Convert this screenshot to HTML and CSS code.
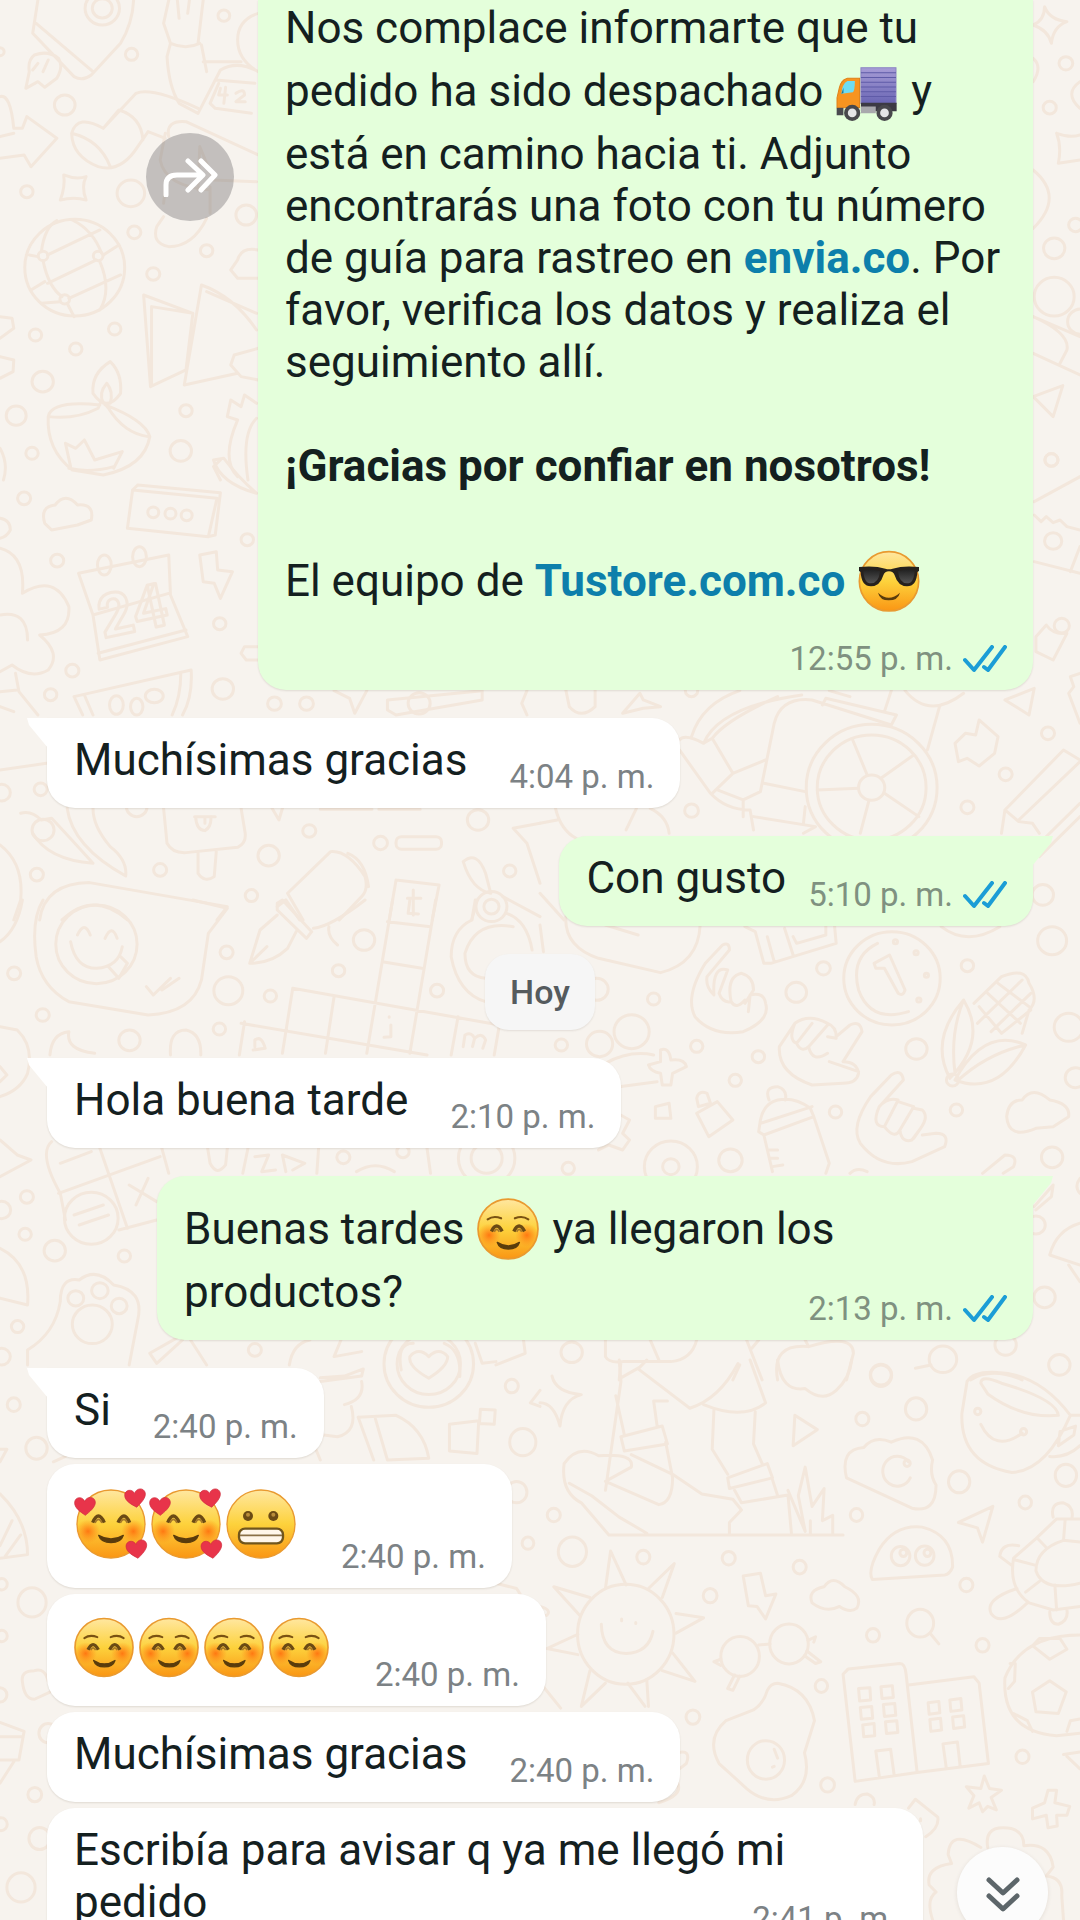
FILE: index.html
```html
<!DOCTYPE html>
<html lang="es">
<head>
<meta charset="utf-8">
<meta name="viewport" content="width=device-width, initial-scale=1">
<title>Chat</title>
<link rel="stylesheet" href="styles.css">
</head>
<body>
<svg class="defs" aria-hidden="true">
  <defs>
    <linearGradient id="face" x1="0" y1="0" x2="0" y2="1">
      <stop offset="0" stop-color="#ffe7a0"/><stop offset=".5" stop-color="#fdd23c"/><stop offset="1" stop-color="#fa9614"/>
    </linearGradient>
    <radialGradient id="cheek"><stop offset="0" stop-color="#ff7410" stop-opacity=".95"/><stop offset="1" stop-color="#ff8a1a" stop-opacity="0"/></radialGradient>
    <linearGradient id="cargo" x1="0" y1="0" x2="0" y2="1"><stop offset="0" stop-color="#a79dd6"/><stop offset="1" stop-color="#6a66b4"/></linearGradient>
    <linearGradient id="lens" x1="0" y1="0" x2="0" y2="1"><stop offset="0" stop-color="#222"/><stop offset="1" stop-color="#555"/></linearGradient>
    <path id="heart" d="M0 30C-14 20-34 8-32-10C-30-26-8-28-2-12C4-28 28-28 30-10C31 6 12 20 0 30Z" fill="#e8344a" stroke="#cf2c3c" stroke-width="2"/>
    <symbol id="smile" viewBox="0 0 180 180">
      <circle cx="90" cy="90" r="87" fill="url(#face)" stroke="#e99a30" stroke-width="5"/>
      <circle cx="35" cy="108" r="34" fill="url(#cheek)"/><circle cx="145" cy="108" r="34" fill="url(#cheek)"/>
      <path d="M31 62Q48 50 70 59M149 62Q132 50 110 59" fill="none" stroke="#7a5212" stroke-width="6" stroke-linecap="round"/>
      <path d="M42 97Q57 66 73 97M107 97Q122 66 138 97" fill="none" stroke="#6b4a14" stroke-width="10"/>
      <path d="M50 98Q57 84 65 98M115 98Q122 84 130 98" fill="none" stroke="#a5782a" stroke-width="5"/>
      <path d="M59 129Q91 150 123 129Q117 148 91 148Q65 148 59 129Z" fill="#5a3c0c" stroke="#5a3c0c" stroke-width="4" stroke-linejoin="round"/>
    </symbol>
    <symbol id="love" viewBox="40 45 225 216">
      <circle cx="151" cy="156" r="102" fill="url(#face)" stroke="#e99a30" stroke-width="4"/>
      <circle cx="82" cy="178" r="36" fill="url(#cheek)"/><circle cx="218" cy="178" r="36" fill="url(#cheek)"/>
      <path d="M96 152Q113 112 131 152M172 152Q190 112 207 152" fill="none" stroke="#6b4a14" stroke-width="10"/>
      <path d="M103 153Q113 131 124 153M179 153Q190 131 200 153" fill="none" stroke="#a5782a" stroke-width="5"/>
      <path d="M114 190Q151 212 188 190Q181 212 151 212Q121 212 114 190Z" fill="#5a3c0c" stroke="#5a3c0c" stroke-width="4" stroke-linejoin="round"/>
      <use href="#heart" transform="translate(74 100)"/><use href="#heart" transform="translate(225 76) rotate(-6)"/><use href="#heart" transform="translate(229 229) rotate(-6)"/>
    </symbol>
    <symbol id="grimace" viewBox="40 45 225 216">
      <circle cx="151" cy="156" r="102" fill="url(#face)" stroke="#e99a30" stroke-width="4"/>
      <circle cx="112" cy="132" r="15" fill="#6b4a14"/><circle cx="188" cy="132" r="15" fill="#6b4a14"/>
      <circle cx="112" cy="128" r="6" fill="#b98c3a"/><circle cx="188" cy="128" r="6" fill="#b98c3a"/>
      <rect x="85" y="170" width="132" height="44" rx="18" fill="#fff6ea" stroke="#70551c" stroke-width="7"/>
      <path d="M88 190H214" stroke="#8a7048" stroke-width="5"/>
    </symbol>
    <symbol id="cool" viewBox="0 0 186 186">
      <circle cx="93" cy="94" r="89" fill="url(#face)" stroke="#e99a30" stroke-width="5"/>
      <path d="M3 51Q50 46 82 56Q93 59 104 56Q136 46 183 51V63L178 66Q176 109 147 109Q120 109 110 76Q106 64 93 64Q80 64 76 76Q66 109 39 109Q10 109 8 66L3 63Z" fill="#26211d"/>
      <path d="M16 62Q44 56 66 64Q62 100 39 100Q18 100 16 62ZM170 62Q142 56 120 64Q124 100 147 100Q168 100 170 62Z" fill="url(#lens)"/>
      <path d="M60 128Q92 158 126 128Q120 151 92 151Q66 151 60 128Z" fill="#5a3c0c"/>
    </symbol>
    <symbol id="truck" viewBox="50 60 184 184">
      <rect x="124" y="83" width="104" height="106" fill="url(#cargo)" stroke="#8b84c4" stroke-width="3"/>
      <path d="M124 98H228M124 112H228M124 126H228M124 140H228M124 154H228M124 168H228" stroke="#5f5ba8" stroke-width="3"/>
      <path d="M124 187H230V212H124Z" fill="#3c3a44"/>
      <path d="M120 114H84Q66 118 60 142L53 172V202H120Z" fill="#f79420" stroke="#e08018" stroke-width="3"/>
      <path d="M106 122H84Q68 130 66 160L100 156Q106 150 106 122Z" fill="#6fdcf2"/>
      <path d="M66 160L72 142V158Z" fill="#1f7890"/>
      <path d="M52 202H72V224H52Z" fill="#4a4a50"/>
      <rect x="124" y="198" width="44" height="20" fill="#a9a9ad"/>
      <circle cx="98" cy="217" r="24" fill="#48484c"/><circle cx="98" cy="217" r="13" fill="#e4e4e6"/>
      <circle cx="194" cy="217" r="24" fill="#48484c"/><circle cx="194" cy="217" r="13" fill="#e4e4e6"/>
    </symbol>
    <symbol id="checks" viewBox="0 0 44 28">
      <path d="M2 15L11 25L29 2M21 22L25 25L42 2" fill="none" stroke="#1b9dd6" stroke-width="4" stroke-linecap="round" stroke-linejoin="round"/>
    </symbol>
  </defs>
</svg>

<svg class="wallpaper" viewBox="0 0 1080 1920" preserveAspectRatio="xMidYMin slice" aria-hidden="true">
  <!-- rocket, hand, sock, globe, book, lamp -->
  <g transform="scale(.3444 .3333)">
    <path d="M110 0L95 100L215 230Q240 245 265 225L350 130Q385 70 388 0M105 70L270 215M85 215L75 265L110 245L130 262L165 235Q185 200 170 175Q140 150 100 165Q80 180 85 215M110 190L95 210M140 180L125 215"/>
    <circle cx="297" cy="25" r="50"/><circle cx="297" cy="25" r="29"/><circle cx="650" cy="47" r="17"/><circle cx="382" cy="163" r="18"/><circle cx="188" cy="315" r="30"/><circle cx="0" cy="155" r="12"/>
    <path d="M490 0L475 70L495 130L485 170Q490 260 520 310L575 340L625 240M515 0L520 55M550 0L545 40M590 0L575 130M585 135L600 215M495 130Q540 150 580 130M590 185H700M750 40Q690 60 690 120Q690 180 750 215M600 290L640 210Q690 180 750 215M625 240L740 250M635 250L610 310L625 325L730 340"/>
    <path d="M640 265L635 285H660M655 262L650 310M685 280Q710 262 710 285L685 305H712"/>
    <path d="M0 290Q30 280 40 385H65L78 350L165 415L90 500L70 465L0 475M0 410L40 400"/>
    <path d="M300 385Q225 340 208 400Q210 470 285 500Q350 520 400 440L430 395L480 415M300 385L395 280Q440 260 575 325M300 385L345 330Q410 350 415 420M208 400Q290 420 320 500M490 410Q480 360 540 365L750 465M480 400L465 480Q480 560 610 570M580 440L620 540L745 545M580 440L575 570M480 560L475 610M610 560V640M600 655Q560 740 490 740Q440 730 455 680L475 650"/>
    <path d="M185 525Q220 540 250 530Q235 560 250 600Q215 590 175 600Q190 560 185 525Z"/>
    <circle cx="78" cy="575" r="18"/><circle cx="380" cy="580" r="40"/><circle cx="390" cy="697" r="19"/><circle cx="600" cy="752" r="18"/><circle cx="445" cy="822" r="19"/><circle cx="715" cy="645" r="30"/>
    <circle cx="217" cy="803" r="145"/><circle cx="125" cy="768" r="14"/><circle cx="285" cy="768" r="14"/><circle cx="188" cy="898" r="14"/>
    <path d="M120 755Q130 680 165 662M138 765L290 690M295 760Q270 690 210 660M85 765L110 770M125 782Q140 860 180 890M138 850L280 780M90 870L130 845M200 895L350 825M290 785Q325 870 290 930M195 910L215 950M300 765L345 735M175 905L120 910"/>
    <path d="M750 750Q700 740 690 780L670 810L690 835H750M417 885L560 940L540 1110L437 1160ZM440 920L440 1150M440 920L560 940M585 855L535 1155L690 1120M585 855Q680 890 745 990M600 875L745 940M750 1045L680 1065L670 1095L700 1130L750 1140"/>
    <path d="M0 950L35 955L40 985L0 1015M0 1070L40 1080L38 1115L0 1135"/>
    <circle cx="103" cy="1005" r="18"/><circle cx="333" cy="987" r="18"/><circle cx="220" cy="1047" r="18"/><circle cx="124" cy="1145" r="31"/><circle cx="47" cy="1247" r="29"/><circle cx="540" cy="1232" r="18"/><circle cx="525" cy="1353" r="31"/><circle cx="93" cy="1360" r="18"/>
    <path d="M320 1085Q265 1120 270 1180Q310 1240 350 1180Q355 1120 320 1085ZM310 1150Q285 1180 300 1210H320Q330 1175 310 1150M290 1215Q150 1200 140 1250Q135 1350 210 1410L300 1425Q420 1400 435 1310Q420 1260 305 1215M140 1250Q220 1260 285 1225L295 1200L315 1225Q360 1300 430 1310M205 1400L190 1330L220 1345L245 1320L275 1380L355 1355L330 1405M200 1405Q260 1420 330 1400"/>
    <path d="M660 1250L670 1200L700 1220L710 1185L745 1210M660 1250L690 1260Q640 1380 690 1430M745 1255Q700 1300 720 1440M640 1380L620 1400L640 1440M0 1345Q25 1390 10 1440"/>
  </g>
  <!-- right margin, upper part -->
  <g transform="translate(540) scale(.3444 .3333)">
    <path d="M1465 20Q1480 60 1530 65Q1490 80 1485 130Q1475 90 1432 75Q1465 60 1465 20ZM1432 175Q1460 200 1432 245M1568 245Q1520 280 1568 325M1500 400Q1540 415 1568 405M1500 400Q1515 440 1505 490L1568 480M1432 510Q1525 590 1432 685M1432 950L1568 1010M1432 950Q1540 1000 1530 1050L1510 1090M1432 1060L1568 1125M1432 1190L1518 1157L1490 1250Z"/>
    <circle cx="1527" cy="190" r="20"/><circle cx="1480" cy="323" r="19"/><circle cx="1493" cy="745" r="31"/><circle cx="1555" cy="675" r="20"/><circle cx="1493" cy="890" r="58"/><circle cx="1570" cy="965" r="38"/><circle cx="1485" cy="1380" r="19"/>
  </g>
  <!-- radio, cloud, calendar, melon, ice lolly, pen -->
  <g transform="translate(0 440) scale(.3444 .3333)">
    <path d="M385 150L630 175L605 290L370 265ZM400 135L640 158L625 285L605 290M385 150L400 135M130 250Q115 200 160 195Q190 155 225 195Q275 190 265 240L225 255L150 270Z"/>
    <circle cx="445" cy="217" r="16"/><circle cx="495" cy="221" r="16"/><circle cx="542" cy="226" r="16"/><circle cx="70" cy="175" r="19"/><circle cx="718" cy="299" r="18"/><circle cx="166" cy="362" r="19"/><circle cx="638" cy="551" r="18"/><circle cx="210" cy="692" r="19"/><circle cx="147" cy="764" r="18"/><circle cx="647" cy="747" r="31"/><circle cx="797" cy="791" r="20"/><circle cx="890" cy="791" r="20"/>
    <path d="M228 400L490 345L495 465L545 590L290 660L270 525ZM270 525L490 460M285 640L540 570M580 345L628 335L632 390L675 395L640 475L622 430L590 425ZM0 235Q30 240 30 270Q20 290 0 295M0 325Q75 345 65 460Q160 400 200 500Q205 580 115 585Q180 640 140 690Q90 720 35 675L0 695M0 525Q80 510 80 600M45 700L55 755L110 825M0 755L50 750M0 800L40 815M215 770L555 690Q560 770 530 825M215 770L240 825M245 765L270 825M525 700Q525 770 500 825M750 620H710L700 640L715 660H750"/>
    <ellipse cx="303" cy="375" rx="20" ry="30"/><ellipse cx="405" cy="350" rx="20" ry="30"/><ellipse cx="338" cy="795" rx="20" ry="28"/><ellipse cx="397" cy="800" rx="18" ry="25"/><ellipse cx="448" cy="768" rx="26" ry="20"/>
    <path d="M620 60L650 55Q690 110 745 160Q640 130 620 60M970 752L1015 775L1030 820L1065 752M1125 780L1400 752V780L1150 825L1125 810ZM1530 752L1515 790L1530 825M0 990L135 970"/>
    <circle cx="1217" cy="790" r="32"/><circle cx="118" cy="1048" r="19"/><circle cx="5" cy="1058" r="25"/><circle cx="397" cy="1100" r="30"/><circle cx="898" cy="1173" r="19"/><circle cx="780" cy="1247" r="31"/><circle cx="465" cy="1290" r="19"/><circle cx="107" cy="1304" r="19"/><circle cx="730" cy="1367" r="18"/><circle cx="1388" cy="1140" r="31"/><circle cx="1105" cy="1209" r="20"/><circle cx="1480" cy="1293" r="18"/><circle cx="125" cy="1170" r="32"/>
    <rect x="1150" y="1190" width="132" height="38" rx="16"/>
    <path d="M60 1120Q90 1110 120 1140L150 1135Q200 1190 270 1270Q140 1260 95 1180M195 1105Q210 1220 365 1308Q370 1260 320 1220Q270 1160 270 1105M475 1105L485 1210Q500 1240 540 1238L690 1222Q715 1210 712 1180L700 1105M575 1238V1300Q595 1330 622 1310L628 1235M565 1130H625M568 1130Q570 1170 595 1172Q615 1160 612 1130M595 1130V1150M790 1105L810 1140L820 1105M930 1108H1080M1100 1108H1220M0 1215Q70 1270 60 1380L40 1440M115 1440Q130 1330 260 1328L660 1400L630 1440M180 1440Q270 1350 370 1440M835 1360L960 1235Q1010 1230 1060 1310Q1070 1350 1050 1370L985 1440M1010 1240Q1060 1260 1070 1340M835 1360L880 1440M805 1400L830 1380L870 1440M1150 1320L1275 1335L1255 1440M1150 1320L1130 1440M1345 1265Q1385 1230 1410 1300L1425 1360Q1370 1350 1345 1265M1370 1440L1385 1380M1460 1370L1568 1430M1490 1165L1568 1150M1490 1165L1530 1210L1568 1330M1200 1350V1425M1183 1375H1222"/>
    <circle cx="1427" cy="1400" r="22"/><circle cx="1427" cy="1400" r="45"/>
  </g>
  <!-- wheelchair, leaf, pencil -->
  <g transform="translate(540 440) scale(.3444 .3333)">
    <circle cx="963" cy="1043" r="190"/><circle cx="963" cy="1043" r="158"/><circle cx="963" cy="1043" r="38"/>
    <path d="M950 1005L908 900M990 1015L1085 945M1000 1060L1100 1130M955 1082L930 1180M925 1045L805 1050M75 750L85 800Q120 840 160 800V750M290 760L240 820L300 805L350 800L300 780ZM440 890Q470 790 580 752M475 910Q520 800 760 765M500 895Q540 840 690 770M405 900Q420 880 475 910L500 895L560 1000L655 960M500 1060L560 1000M405 930L495 1060Q540 1110 610 1110L620 1170M515 1050L590 1080L640 1055L680 850Q700 770 790 780L1020 855L1035 825L830 775L820 795M650 1030L770 1055M590 1080V1130M620 1130L800 1160L765 1180M770 1100L765 1150M1020 752L1000 815M1160 800L1125 930M1060 752Q1130 840 1230 760M840 752L900 770M1350 780L1435 745L1420 825ZM1275 840L1330 890L1320 940L1275 978L1240 955L1215 965L1205 910L1235 880L1265 885ZM1340 1180L1350 1110L1520 930L1568 960M1390 1140L1568 965M1350 1110L1390 1145L1430 1150L1450 1180M1450 1250L1568 1130M1460 1200L1568 1090"/>
    <path d="M1435 185L1568 110M1435 225L1455 245L1470 230L1490 248L1510 240L1530 260L1568 270M1435 365L1568 400M1568 320L1540 395M1440 590L1470 555Q1490 585 1530 580L1490 660L1440 635ZM1568 700L1540 710L1550 740L1535 760L1568 850"/>
    <circle cx="1490" cy="303" r="25"/><circle cx="1515" cy="557" r="22"/><circle cx="1485" cy="60" r="19"/><circle cx="440" cy="752" r="18"/><circle cx="1475" cy="880" r="19"/><circle cx="1352" cy="1003" r="19"/><circle cx="1241" cy="1102" r="19"/><circle cx="440" cy="1112" r="20"/><circle cx="1460" cy="1365" r="31"/>
    <path d="M45 1105Q60 1170 105 1195M280 1105L250 1170M320 1105Q370 1130 375 1180M0 1150L50 1140M0 1360L70 1440"/>
  </g>
  <!-- sticker bubble, nib, crossword, paw -->
  <g transform="translate(0 900) scale(.3444 .3333)">
    <path d="M125 0Q90 60 105 170Q120 260 200 305L430 345Q560 340 585 240L605 100L660 25L560 0M205 125Q220 205 280 205Q345 200 355 140M225 105Q245 60 262 105M305 115Q325 70 340 115M315 200L345 235L370 190L350 170M425 260L445 285L495 235M470 270L520 235M805 10L820 0L905 95L890 115L805 30ZM805 45L755 90L725 190Q790 190 835 145L860 95M730 185L775 140M910 85Q960 80 1060 0M955 80Q950 110 980 135"/>
    <circle cx="280" cy="133" r="118"/><circle cx="41" cy="220" r="19"/><circle cx="124" cy="345" r="19"/><circle cx="658" cy="157" r="19"/><circle cx="663" cy="272" r="42"/><circle cx="785" cy="288" r="18"/><circle cx="1057" cy="120" r="31"/><circle cx="983" cy="212" r="18"/><circle cx="1269" cy="272" r="19"/><circle cx="637" cy="387" r="18"/><circle cx="376" cy="421" r="31"/>
    <path d="M1140 0L1065 460M1265 0L1190 460M1125 65L1250 80M1110 185L1225 205M850 265L1450 375M850 265L820 460M970 290L945 460M700 370L1240 465M710 365L695 465M1330 350L1310 465M1450 375L1435 465M740 440V420Q760 405 770 445L735 450M1345 440L1350 405Q1370 395 1378 415L1372 440M1378 415Q1400 395 1410 420L1402 445M1130 350V352M1135 375V410L1115 412M1190 0L1185 40L1215 42M1380 0L1370 60Q1310 90 1310 170Q1330 280 1410 305M1470 40Q1530 60 1545 150M1410 235Q1350 230 1350 160Q1380 60 1490 80M0 380L50 390Q100 440 80 520Q60 570 0 590M0 500L20 525L0 545M65 0Q50 90 0 125M145 465Q150 400 200 395Q190 450 275 460M495 465Q490 390 540 390Q585 400 583 465"/>
    <path d="M0 720L50 765L90 780L0 830M150 725Q110 760 175 880L190 960M290 745L370 985M170 880L465 770M175 790L265 755M470 745L490 820M345 990L455 960M375 855L455 905M430 835L395 915M215 945L300 915M230 975L315 945M603 745L610 790Q630 830 655 795L660 745M720 745L705 820M740 770L780 765L760 815L800 810M820 765L830 815M820 765L885 790L850 810M925 745L920 820M1240 745L1250 820M1035 815Q1090 780 1145 815M0 1045Q90 1090 80 1215L0 1195M175 1205Q175 1130 230 1140Q280 1100 330 1155Q420 1170 400 1260L375 1395M175 1205Q160 1300 80 1350V1395M435 1360L520 1310M455 1390L530 1320M435 1360L455 1390M550 1315L600 1395M840 1395Q850 1330 900 1320M990 1320L970 1370L1050 1355M1380 1330L1400 1390L1440 1385M1520 1320L1525 1360L1440 1395M1165 1410Q1150 1330 1200 1330M1290 1330Q1340 1350 1335 1430"/>
    <circle cx="265" cy="955" r="78"/><circle cx="78" cy="891" r="19"/><circle cx="5" cy="930" r="26"/><circle cx="73" cy="1003" r="18"/><circle cx="159" cy="1052" r="31"/><circle cx="361" cy="1068" r="18"/><circle cx="268" cy="1273" r="58"/><circle cx="220" cy="1195" r="23"/><circle cx="290" cy="1172" r="24"/><circle cx="346" cy="1218" r="23"/><circle cx="51" cy="1280" r="18"/><circle cx="740" cy="1350" r="19"/><circle cx="997" cy="772" r="19"/><circle cx="1170" cy="755" r="18"/><circle cx="1413" cy="775" r="82"/><circle cx="1413" cy="775" r="45"/><circle cx="5" cy="1370" r="25"/><circle cx="1245" cy="1392" r="130"/><circle cx="1245" cy="1392" r="92"/>
    <path d="M1245 1435Q1185 1400 1190 1370Q1215 1340 1245 1370Q1275 1340 1300 1370Q1300 1400 1245 1435Z"/>
  </g>
  <!-- hand signs, coin, corn, bottle -->
  <g transform="translate(540 900) scale(.3444 .3333)">
    <path d="M75 50Q70 140 170 175L350 218Q460 190 465 75M190 75L285 105M595 80L625 95L650 190H670L860 130L855 75M660 110L680 185M710 85L735 165M735 110L745 130L830 105V75M1165 80Q1240 140 1335 80M0 75L10 155"/>
    <path d="M485 230L550 150Q550 125 530 135L480 190Q420 290 450 350Q500 410 590 395Q670 360 655 310Q650 275 610 285M485 230Q480 260 505 285Q500 195 545 210L520 280Q530 310 555 305Q540 230 585 220M555 305Q570 330 595 300M585 220Q620 230 620 270L595 310M610 285L605 335"/>
    <path d="M860 410L900 375Q930 360 935 395L880 485Q920 485 925 520Q920 550 880 550L790 555Q690 520 695 440L740 370Q780 340 835 370Q860 380 860 410M740 370Q720 420 745 430L790 370M745 430Q760 460 780 440L835 375M780 440Q790 490 835 460M840 485L925 515M835 410L860 415"/>
    <path d="M985 620L1055 540Q1050 505 1020 525L960 590Q900 680 930 730Q990 810 1080 785L1175 740Q1190 700 1150 700L1110 705M985 620Q960 680 1000 680L1040 600Q1010 590 985 620M1000 680Q1030 720 1045 690L1085 620L1040 605M1045 690Q1050 730 1080 720L1105 685Q1130 650 1110 630L1085 625M1105 685L1085 715"/>
    <circle cx="1022" cy="235" r="140"/><path d="M1070 335Q960 370 925 270Q900 170 980 130M970 190L1015 165L1060 270Q1055 290 1040 280L1000 205L975 205Z"/><circle cx="1032" cy="125" r="6"/><circle cx="1092" cy="158" r="6"/><circle cx="1122" cy="226" r="6"/><circle cx="1100" cy="300" r="6"/>
    <path d="M1230 300Q1130 420 1190 535Q1300 420 1230 300ZM1230 300Q1190 400 1205 520M1410 435Q1290 380 1205 540Q1330 590 1410 435ZM1410 435Q1300 460 1215 540M1260 310L1340 230Q1410 200 1420 250Q1450 300 1420 330L1400 400M1275 320L1340 400M1300 280L1395 370M1330 250L1420 320M1270 370L1400 240M1310 395L1425 280M1340 400L1425 330"/><circle cx="1198" cy="540" r="18"/>
    <path d="M640 660Q650 610 690 600Q740 590 785 625L795 650L650 705L635 695ZM640 670L790 620M665 600Q650 560 690 560Q720 570 712 600M650 705L675 815M795 650L840 790L830 820M665 750H690M670 775H690M675 800L705 795"/>
    <path d="M455 640L515 605L560 660L490 710ZM455 595Q460 570 485 580L495 610L460 620ZM335 620L375 610L380 655L335 655ZM1355 650Q1360 600 1400 600Q1430 555 1480 600Q1540 610 1535 650L1490 680L1440 685Q1360 720 1355 650ZM350 450Q375 440 380 480Q420 475 425 500L385 520L380 555H355L350 520Q320 515 315 495L350 485ZM190 490Q260 450 330 465M230 560L340 545M1285 820L1350 765Q1390 765 1375 800L1345 820M900 820Q920 800 950 815M1568 835Q1550 860 1568 880M225 640L260 660L240 700L260 720L240 750L200 735L170 750"/>
    <circle cx="266" cy="395" r="51"/><circle cx="173" cy="432" r="38"/><circle cx="165" cy="268" r="33"/><circle cx="330" cy="297" r="18"/><circle cx="62" cy="435" r="18"/><circle cx="455" cy="439" r="18"/><circle cx="823" cy="205" r="20"/><circle cx="744" cy="277" r="30"/><circle cx="1241" cy="197" r="18"/><circle cx="1487" cy="122" r="42"/><circle cx="1535" cy="382" r="42"/><circle cx="1093" cy="447" r="31"/><circle cx="1555" cy="533" r="30"/><circle cx="634" cy="470" r="18"/><circle cx="567" cy="541" r="18"/><circle cx="858" cy="636" r="18"/><circle cx="1209" cy="630" r="18"/><circle cx="1487" cy="772" r="31"/><circle cx="553" cy="781" r="34"/><circle cx="380" cy="800" r="77"/><circle cx="380" cy="800" r="24"/><circle cx="82" cy="805" r="18"/>
    <path d="M1568 970Q1500 990 1480 1065L1568 1095M1535 1095L1568 1145M1435 920L1490 855L1485 890L1440 930M190 1315V1370Q200 1390 240 1385H380Q440 1380 455 1320M320 1320L345 1380M235 1385L230 1440M580 1395L560 1440M600 1320L645 1440M635 1320L615 1345M690 1440Q670 1330 780 1340Q910 1300 910 1360L890 1440M780 1340L770 1320M1090 1405L1135 1395M1250 1440Q1310 1400 1400 1440"/>
    <circle cx="1465" cy="1192" r="31"/><circle cx="1440" cy="975" r="27"/><circle cx="92" cy="1357" r="31"/><circle cx="1170" cy="1378" r="40"/><circle cx="1508" cy="1395" r="31"/><circle cx="1352" cy="1335" r="31"/><circle cx="990" cy="1425" r="30"/>
  </g>
  <!-- left margin, lower part -->
  <g transform="translate(0 1360) scale(.3444 .3571)">
    <circle cx="40" cy="125" r="19"/><circle cx="106" cy="247" r="31"/><circle cx="93" cy="679" r="41"/><circle cx="5" cy="628" r="16"/><circle cx="5" cy="773" r="16"/><circle cx="101" cy="1217" r="20"/><circle cx="3" cy="1300" r="18"/><circle cx="115" cy="1340" r="31"/><circle cx="61" cy="1477" r="41"/><circle cx="140" cy="1045" r="27"/><circle cx="0" cy="938" r="20"/><circle cx="1486" cy="73" r="19"/><circle cx="1518" cy="230" r="38"/><circle cx="1500" cy="370" r="30"/><circle cx="1533" cy="513" r="17"/>
    <path d="M0 375Q80 450 80 545L0 555M35 450L0 520M60 490L15 550M0 250L20 250L0 285M155 285L190 270M65 900Q60 870 100 870Q130 860 140 900M65 900Q70 950 100 950L145 930M0 1015L70 1040L55 1120H0M0 1055L65 1055M40 1125L0 1185M1040 160L1085 280M1040 160L1150 155Q1230 190 1245 275L1125 280M1090 165L1125 280M1305 180L1390 170L1385 262L1305 255ZM1395 138L1438 140L1435 180L1392 178ZM930 50L1000 45L1055 25L1050 45L930 60M1050 60Q1060 110 1000 125M1020 130Q1040 200 980 215L940 210M915 245L930 280M1440 625L1500 640L1510 655M1450 600L1480 540M1568 85L1540 120L1568 130"/>
  </g>
  <!-- hiker, mug, sun, turtle, glasses, egg, buildings, ball -->
  <g transform="translate(540 1360) scale(.3444 .3571)">
    <path d="M230 0L235 60L190 365M235 50L290 20L310 0M285 25L435 135Q520 110 575 10M610 0L655 120Q590 170 475 125M220 100L245 210M235 215L355 185L370 235L245 255ZM340 185L330 115H370M365 230L385 330Q385 400 345 405L190 340L265 300Q275 260 170 268Q110 235 70 290Q60 370 120 400L200 490H880M85 345L150 380L230 440L310 485M265 265L385 320L470 375L560 390L585 420L550 455V490M505 140L500 250L545 320M625 145L620 235L645 290M545 330L660 290L675 330L550 360ZM565 365L585 400L720 378L730 485M675 335L690 380M720 365L770 480L750 380L770 300L790 410L825 360L820 450L850 435V490M785 450V490"/>
    <path d="M35 45Q45 90 120 97Q65 110 58 185Q40 120 0 120M740 155L805 195L735 240ZM690 0Q700 90 770 80Q820 120 860 85Q900 50 905 0M890 330Q870 250 940 245Q970 210 1020 230Q1110 190 1140 280Q1130 320 1150 350Q1150 430 1080 415ZM1070 285A42 42 0 1 0 1075 330M1240 60Q1260 30 1330 35Q1450 40 1540 155Q1470 310 1370 315Q1220 290 1225 150ZM1280 65Q1280 40 1340 65Q1500 110 1505 155Q1400 165 1300 95ZM1280 180Q1320 260 1400 205M1540 155H1568M1480 270Q1530 275 1568 240M1505 240L1510 200L1555 185L1550 210Z"/>
    <circle cx="1271" cy="144" r="9"/><circle cx="1404" cy="201" r="9"/><circle cx="1066" cy="289" r="9"/>
    <circle cx="990" cy="43" r="31"/><circle cx="1092" cy="137" r="31"/><circle cx="936" cy="165" r="19"/><circle cx="1217" cy="341" r="31"/><circle cx="1527" cy="323" r="31"/><circle cx="919" cy="434" r="18"/><circle cx="1409" cy="399" r="18"/><circle cx="40" cy="434" r="19"/><circle cx="94" cy="537" r="41"/><circle cx="300" cy="552" r="19"/><circle cx="548" cy="555" r="19"/><circle cx="754" cy="580" r="19"/><circle cx="494" cy="660" r="20"/><circle cx="1238" cy="630" r="19"/><circle cx="967" cy="771" r="19"/><circle cx="1285" cy="799" r="19"/><circle cx="817" cy="913" r="18"/><circle cx="444" cy="1000" r="20"/><circle cx="1401" cy="1111" r="19"/><circle cx="835" cy="1190" r="20"/>
    <circle cx="249" cy="768" r="140"/><path d="M190 640L205 535L250 630M315 640L390 570L355 665M395 710L475 722L395 765M385 820L450 900L355 870M310 895L315 970M255 905L305 970M190 905L120 970L145 870M110 825L20 808L110 768M115 715L40 635L145 665M178 740Q180 820 250 822Q315 820 328 760M237 725V730M278 735V738"/>
    <path d="M590 605L640 597L655 660L685 655L655 725L630 690L605 688ZM790 680Q775 645 825 635Q850 600 885 635Q940 660 920 695Q900 710 870 690Q830 710 790 680ZM965 615Q950 590 985 530Q1030 460 1110 468Q1200 490 1198 580Q1190 600 1175 602ZM1215 455L1315 410L1285 510L1270 470Z"/>
    <circle cx="1047" cy="549" r="27"/><circle cx="1117" cy="548" r="27"/><circle cx="1055" cy="540" r="10"/><circle cx="1125" cy="540" r="10"/><circle cx="1104" cy="737" r="39"/><circle cx="581" cy="830" r="56"/><circle cx="723" cy="795" r="56"/>
    <path d="M1135 768L1158 795M635 798L668 795M525 838L505 845L525 855M565 882L545 920L560 925L580 885M778 785L800 775L795 790M775 815L815 845L800 850L768 828M1568 445L1500 445L1440 500L1375 555Q1360 640 1420 680L1490 700L1568 690M1445 500L1470 525M1525 445L1520 505M1380 560L1440 575M1410 650L1450 620M1495 630L1500 700M1568 510L1520 505Q1440 530 1440 590Q1460 650 1568 625M1490 440Q1480 400 1520 400Q1550 410 1545 440M1390 520Q1340 510 1335 550L1370 575M1385 640Q1290 670 1310 710Q1340 750 1415 680M1480 705Q1480 740 1505 740Q1535 730 1530 700"/>
    <path d="M690 905Q780 920 797 1010L768 1100Q790 1180 730 1220Q660 1250 600 1200L520 1130Q480 1060 540 1010L620 980Q650 960 660 925Q670 905 690 905ZM680 1090L690 1115M675 1140L680 1138"/><circle cx="656" cy="1120" r="54"/>
    <path d="M880 880L895 865L1045 850Q1060 850 1063 880L1095 1155L915 1180ZM1070 910L1260 887L1275 905L1302 1130L1095 1155M985 1165L975 1095L1018 1090L1028 1160M1180 1145L1170 1075L1212 1070L1220 1138M925 920L958 918L960 952L928 955ZM990 915L1023 912L1026 945L993 948ZM930 973L963 970L966 1003L933 1006ZM997 965L1030 962L1033 995L1000 998ZM937 1022L970 1018L972 1052L940 1055ZM1003 1013L1036 1010L1039 1043L1006 1046ZM1127 960L1158 956L1161 988L1130 992ZM1190 952L1222 948L1225 980L1193 984ZM1132 1007L1163 1003L1166 1036L1135 1040ZM1198 1000L1230 996L1233 1028L1201 1032Z"/>
    <path d="M1568 770Q1400 770 1350 890Q1340 1040 1500 1052L1568 1045M1430 800L1450 780L1510 780L1530 810L1480 838ZM1430 930L1480 898L1528 930L1505 990L1440 985ZM1365 850L1380 850L1378 900L1360 920M1375 990L1415 1010L1430 1040M1530 1040L1540 1010L1568 1005M1520 1105L1568 1098M1530 1110L1568 1145"/>
    <path d="M1280 1200L1290 1165L1305 1200L1340 1205L1310 1225L1325 1260L1300 1250L1285 1265L1275 1240L1245 1255L1260 1220L1238 1195ZM1465 1240L1475 1205H1500L1495 1240L1538 1250L1530 1275L1500 1275L1502 1305L1475 1310L1470 1275L1430 1285V1255ZM915 1245Q920 1215 950 1215Q975 1225 970 1245M1070 1255L1090 1230L1155 1280Q1160 1310 1120 1335M1105 1285V1290M400 1100Q440 1090 425 1130L405 1145M400 1185Q415 1220 345 1240M10 915L60 975M0 690Q35 700 20 715L0 720"/>
    <path d="M1300 1365Q1290 1310 1345 1310Q1405 1310 1405 1360Q1480 1350 1490 1420L1470 1445Q1520 1450 1515 1500L1520 1568M1280 1365Q1190 1310 1185 1385L1195 1410Q1120 1420 1130 1470L1150 1490Q1120 1510 1140 1568"/>
  </g>
  <text class="wallpaper-number" x="98" y="632" transform="rotate(-12 130 610)">24</text>
</svg>

<main class="chat">
  <article class="message out continued">
    <button class="forward" type="button" aria-label="Reenviar">
      <svg viewBox="0 0 56 40" width="56" height="40"><path d="M4 38V28Q4 18 15 18H40M26 4L41 18L26 33M39 4L53 18L39 33"/></svg>
    </button>
    <div class="bubble stacked">
      <div class="text">
        <p>Nos complace informarte que tu pedido ha sido despachado <svg class="emoji" role="img" aria-label="camión"><use href="#truck"/></svg> y está en camino hacia ti. Adjunto encontrarás una foto con tu número de guía para rastreo en <a href="#envia">envia.co</a>. Por favor, verifica los datos y realiza el seguimiento allí.</p>
        <p><strong>¡Gracias por confiar en nosotros!</strong></p>
        <p>El equipo de <a href="#tustore">Tustore.com.co</a> <svg class="emoji" role="img" aria-label="gafas de sol"><use href="#cool"/></svg></p>
      </div>
      <div class="meta"><time>12:55 p. m.</time><svg class="checks" role="img" aria-label="Leído"><use href="#checks"/></svg></div>
    </div>
  </article>

  <article class="message in first">
    <div class="bubble"><p class="text">Muchísimas gracias</p><div class="meta"><time>4:04 p. m.</time></div></div>
  </article>

  <article class="message out first">
    <div class="bubble"><p class="text">Con gusto</p><div class="meta"><time>5:10 p. m.</time><svg class="checks" role="img" aria-label="Leído"><use href="#checks"/></svg></div></div>
  </article>

  <div class="day">Hoy</div>

  <article class="message in first">
    <div class="bubble"><p class="text">Hola buena tarde</p><div class="meta"><time>2:10 p. m.</time></div></div>
  </article>

  <article class="message out first">
    <div class="bubble wrapped"><p class="text">Buenas tardes <svg class="emoji" role="img" aria-label="sonrisa"><use href="#smile"/></svg> ya llegaron los productos?</p><div class="meta"><time>2:13 p. m.</time><svg class="checks" role="img" aria-label="Leído"><use href="#checks"/></svg></div></div>
  </article>

  <article class="message in first">
    <div class="bubble"><p class="text">Si</p><div class="meta"><time>2:40 p. m.</time></div></div>
  </article>

  <article class="message in">
    <div class="bubble">
      <div class="text emoji-row large">
        <svg role="img" aria-label="cara con corazones"><use href="#love"/></svg>
        <svg role="img" aria-label="cara con corazones"><use href="#love"/></svg>
        <svg role="img" aria-label="mueca"><use href="#grimace"/></svg>
      </div>
      <div class="meta"><time>2:40 p. m.</time></div>
    </div>
  </article>

  <article class="message in">
    <div class="bubble">
      <div class="text emoji-row">
        <svg role="img" aria-label="sonrisa"><use href="#smile"/></svg>
        <svg role="img" aria-label="sonrisa"><use href="#smile"/></svg>
        <svg role="img" aria-label="sonrisa"><use href="#smile"/></svg>
        <svg role="img" aria-label="sonrisa"><use href="#smile"/></svg>
      </div>
      <div class="meta"><time>2:40 p. m.</time></div>
    </div>
  </article>

  <article class="message in">
    <div class="bubble"><p class="text">Muchísimas gracias</p><div class="meta"><time>2:40 p. m.</time></div></div>
  </article>

  <article class="message in">
    <div class="bubble wrapped"><p class="text">Escribía para avisar q ya me llegó mi pedido</p><div class="meta"><time>2:41 p. m.</time></div></div>
  </article>
</main>

<button class="scroll-down" type="button" aria-label="Ir al final">
  <svg viewBox="0 0 34 38" width="34" height="38"><path d="M3 6L17 19L31 6M3 22L17 35L31 22"/></svg>
</button>
</body>
</html>
```

FILE: styles.css
```css
* {
  box-sizing: border-box;
}

body {
  position: relative;
  height: 100vh;
  margin: 0;
  overflow: hidden;
  background: #f7f3ee;
  color: #14201f;
  font-family: Roboto, "Liberation Sans", sans-serif;
  font-size: 44px;
  line-height: 52px;
}

p {
  margin: 0;
}

button {
  padding: 0;
  border: 0;
}

.defs {
  position: absolute;
  width: 0;
  height: 0;
}

.wallpaper {
  position: absolute;
  inset: 0;
  width: 100%;
  height: 100%;
  fill: none;
  stroke: #f3e7dc;
  stroke-width: 3px;
  stroke-linecap: round;
  stroke-linejoin: round;
}

.wallpaper path,
.wallpaper circle,
.wallpaper ellipse,
.wallpaper rect {
  vector-effect: non-scaling-stroke;
}

.wallpaper-number {
  font-size: 60px;
  font-weight: 700;
}

.chat {
  position: relative;
  display: flex;
  flex-direction: column;
  padding: 0 47px;
}

.message {
  display: flex;
  margin-top: 6px;
}

.message.first {
  margin-top: 28px;
}

.message.out {
  justify-content: flex-end;
}

.message.continued {
  gap: 24px;
  margin-top: 0;
}

.bubble {
  position: relative;
  display: flex;
  align-items: flex-end;
  gap: 42px;
  padding: 16px 26px 11px 27px;
  border-radius: 28px;
  background: #fff;
  box-shadow: 0 1px 2px rgba(60, 40, 20, 0.12);
}

.out .bubble {
  gap: 22px;
  background: #e4ffdb;
}

/* Speech tail on the first bubble of a group */
.first .bubble::before {
  content: "";
  position: absolute;
  top: 0;
  width: 21px;
  height: 30px;
  background: inherit;
}

.in.first .bubble {
  border-top-left-radius: 0;
}

.in.first .bubble::before {
  left: -20px;
  clip-path: polygon(0 0, 100% 0, 100% 100%, 2px 7px);
}

.out.first .bubble {
  border-top-right-radius: 0;
}

.out.first .bubble::before {
  right: -20px;
  clip-path: polygon(0 0, 100% 0, 19px 7px, 0 100%);
}

.text {
  margin-bottom: 11px;
}

.text p + p {
  margin-top: 52px;
}

.bubble.stacked {
  flex-direction: column;
  gap: 10px;
  max-width: 775px;
  padding-top: 2px;
  border-top-left-radius: 0;
  border-top-right-radius: 0;
}

/* The time shares the last text line's corner */
.bubble.wrapped {
  display: grid;
  max-width: 876px;
}

.wrapped .text,
.wrapped .meta {
  grid-area: 1 / 1;
}

.wrapped .meta {
  justify-self: end;
}

a {
  color: #0d7fab;
  font-weight: 700;
  text-decoration: none;
}

.meta {
  display: flex;
  align-items: center;
  gap: 10px;
  color: #7c8285;
  font-size: 33px;
  line-height: 40px;
  white-space: nowrap;
}

.out .meta {
  color: #7f9180;
}

.checks {
  width: 44px;
  height: 28px;
}

.emoji {
  width: 62px;
  height: 62px;
  margin: 6px 2px;
  vertical-align: -22px;
}

.emoji-row {
  display: flex;
  gap: 5px;
  padding: 7px 4px 6px 0;
}

.emoji-row svg {
  width: 60px;
  height: 61px;
}

.emoji-row.large {
  gap: 0;
  padding: 7px 0;
}

.emoji-row.large svg {
  width: 75px;
  height: 72px;
}

.day {
  align-self: center;
  margin-top: 28px;
  padding: 18px 25px;
  border-radius: 24px;
  background: #f6f6f6;
  box-shadow: 0 1px 2px rgba(60, 40, 20, 0.1);
  color: #555b5e;
  font-size: 34px;
  font-weight: 500;
  line-height: 40px;
}

.forward {
  display: grid;
  place-items: center;
  width: 88px;
  height: 88px;
  margin-top: 133px;
  border-radius: 50%;
  background: rgba(110, 108, 110, 0.38);
}

.forward svg,
.scroll-down svg {
  fill: none;
  stroke: #fff;
  stroke-width: 5px;
  stroke-linecap: round;
  stroke-linejoin: round;
}

.scroll-down {
  position: fixed;
  right: 32px;
  bottom: -18px;
  display: grid;
  place-items: center;
  width: 91px;
  height: 91px;
  border-radius: 50%;
  background: #fcfcfc;
  box-shadow: 0 1px 4px rgba(60, 40, 20, 0.1);
}

.scroll-down svg {
  stroke: #5d666a;
}
```
